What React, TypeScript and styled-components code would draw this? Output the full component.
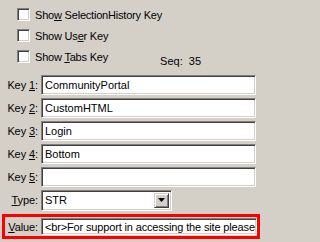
import React from 'react'
import styled, { createGlobalStyle } from 'styled-components';

const GlobalStyle = createGlobalStyle`
  html, body {
    margin: 0;
    padding: 0;
    background-color: #d4d0c8;
  }
  body {
    font-family: "Liberation Sans", Arial, sans-serif;
    font-size: 11px;
    color: #000000;
  }
`;

const Panel = styled.div`
  width: 261px;
  height: 242px;
  box-sizing: border-box;
  padding-top: 8px;
  display: flex;
  flex-direction: column;
  overflow: hidden;
`;

const CheckRow = styled.div`
  display: flex;
  align-items: center;
  height: 13px;
  margin-bottom: 8px;
  padding-left: 17px;
`;

const CheckBox = styled.span`
  width: 13px;
  height: 13px;
  box-sizing: border-box;
  background: #ffffff;
  border-top: 1px solid #808080;
  border-left: 1px solid #808080;
  border-right: 1px solid #ffffff;
  border-bottom: 1px solid #ffffff;
  box-shadow: inset 1px 1px 0 #404040, inset -1px -1px 0 #d4d0c8;
  flex-shrink: 0;
`;

const CheckLabel = styled.span`
  margin-left: 5px;
  letter-spacing: -0.2px;
  white-space: nowrap;
`;

const Seq = styled.span`
  margin-left: auto;
  margin-right: 60px;
  padding-top: 9px;
  word-spacing: 3px;
  white-space: nowrap;
`;

const Fields = styled.div`
  display: flex;
  flex-direction: column;
  gap: 3px;
  margin-top: 4px;
`;

const FieldRow = styled.div`
  display: flex;
  align-items: center;
  height: 20px;
`;

const Label = styled.span`
  width: 38px;
  text-align: right;
  padding-right: 3px;
  letter-spacing: -0.1px;
  white-space: nowrap;
  flex-shrink: 0;
`;

const Edit = styled.div<{ $width?: number; $height?: number }>`
  box-sizing: border-box;
  height: ${p => (p.$height ?? 20)}px;
  width: ${p => (p.$width ? `${p.$width}px` : 'auto')};
  flex: ${p => (p.$width ? 'none' : '1')};
  margin-right: ${p => (p.$width ? 0 : 5)}px;
  background: #ffffff;
  border-top: 1px solid #808080;
  border-left: 1px solid #808080;
  border-right: 1px solid #ffffff;
  border-bottom: 1px solid #ffffff;
  box-shadow: inset 1px 1px 0 #404040, inset -1px -1px 0 #d4d0c8;
  display: flex;
  align-items: center;
  padding-left: 3px;
  white-space: nowrap;
  overflow: hidden;
  position: relative;
`;

const DropButton = styled.span`
  position: absolute;
  right: 2px;
  top: 2px;
  bottom: 2px;
  width: 15px;
  box-sizing: border-box;
  background: #d4d0c8;
  border-top: 1px solid #d4d0c8;
  border-left: 1px solid #d4d0c8;
  border-right: 1px solid #404040;
  border-bottom: 1px solid #404040;
  box-shadow: inset 1px 1px 0 #ffffff, inset -1px -1px 0 #808080;
  display: flex;
  align-items: center;
  justify-content: center;
`;

const Highlight = styled.div`
  margin: 4px 1px 0 2px;
  border: 3px solid #ff0000;
  padding: 1px 0;
  display: flex;
  align-items: center;
  height: 17px;
`;

const ValueLabel = styled(Label)`
  width: 33px;
`;

const ValueEdit = styled(Edit)`
  height: 17px;
  margin-right: 0;
  letter-spacing: -0.15px;
`;

const Key = ({ text, mn }: { text: string; mn: string }) => {
  const i = text.indexOf(mn);
  return (
    <>
      {text.slice(0, i)}
      <u>{mn}</u>
      {text.slice(i + 1)}
    </>
  );
};

const keys = [
  { n: '1', v: 'CommunityPortal' },
  { n: '2', v: 'CustomHTML' },
  { n: '3', v: 'Login' },
  { n: '4', v: 'Bottom' },
  { n: '5', v: '' },
];

function App() {
  return (
    <>
      <GlobalStyle />
      <Panel>
        <CheckRow>
          <CheckBox />
          <CheckLabel><Key text="Show SelectionHistory Key" mn="w" /></CheckLabel>
        </CheckRow>
        <CheckRow>
          <CheckBox />
          <CheckLabel>Show Us<u>e</u>r Key</CheckLabel>
        </CheckRow>
        <CheckRow>
          <CheckBox />
          <CheckLabel><Key text="Show Tabs Key" mn="T" /></CheckLabel>
          <Seq>Seq: 35</Seq>
        </CheckRow>
        <Fields>
          {keys.map(k => (
            <FieldRow key={k.n}>
              <Label>Key <u>{k.n}</u>:</Label>
              <Edit>{k.v}</Edit>
            </FieldRow>
          ))}
          <FieldRow>
            <Label><u>T</u>ype:</Label>
            <Edit $width={131} $height={21}>
              STR
              <DropButton>
                <svg width="7" height="4" viewBox="0 0 7 4">
                  <path d="M0 0h7L3.5 4z" fill="#000000" />
                </svg>
              </DropButton>
            </Edit>
          </FieldRow>
        </Fields>
        <Highlight>
          <ValueLabel><u>V</u>alue:</ValueLabel>
          <ValueEdit>&lt;br&gt;For support in accessing the site please</ValueEdit>
        </Highlight>
      </Panel>
    </>
  );
}

export default App
